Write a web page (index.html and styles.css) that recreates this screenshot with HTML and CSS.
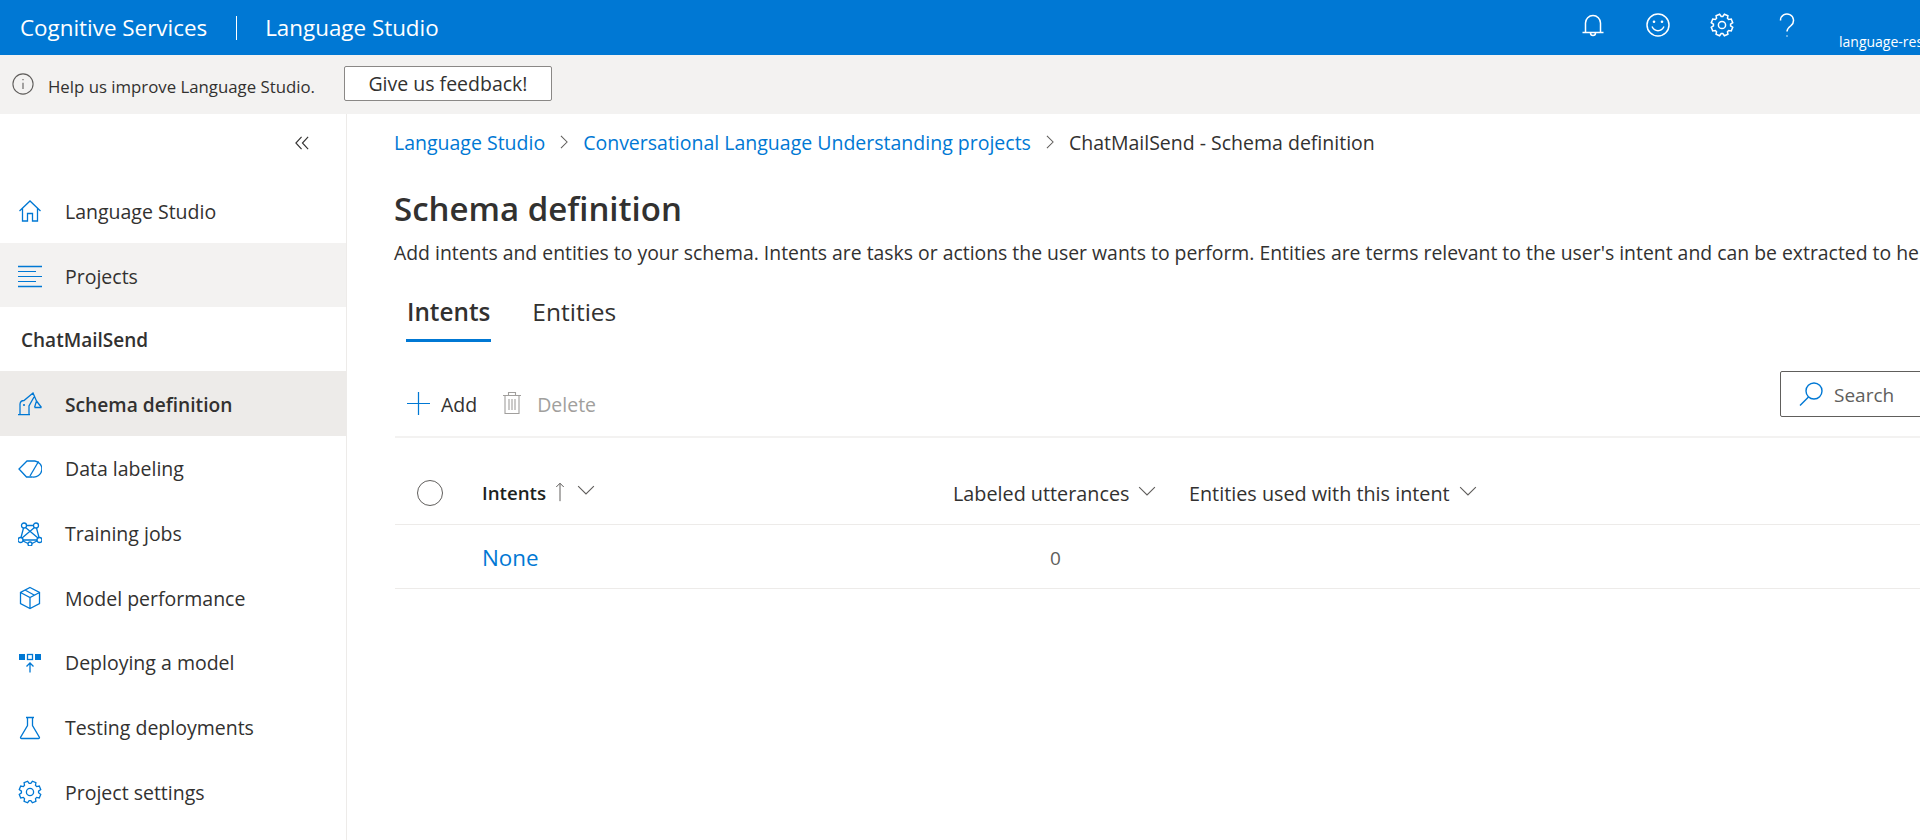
FILE: index.html
```html
<!DOCTYPE html>
<html lang="en">
<head>
<meta charset="utf-8">
<title>Language Studio</title>
<link rel="stylesheet" href="styles.css">
</head>
<body>
<svg class="defs" width="0" height="0" aria-hidden="true">
  <symbol id="gear" viewBox="0 0 24 24">
    <polygon points="20.56,12.82 22.74,14.38 21.28,17.91 18.64,17.47 17.47,18.64 17.91,21.28 14.38,22.74 12.82,20.56 11.18,20.56 9.62,22.74 6.09,21.28 6.53,18.64 5.36,17.47 2.72,17.91 1.26,14.38 3.44,12.82 3.44,11.18 1.26,9.62 2.72,6.09 5.36,6.53 6.53,5.36 6.09,2.72 9.62,1.26 11.18,3.44 12.82,3.44 14.38,1.26 17.91,2.72 17.47,5.36 18.64,6.53 21.28,6.09 22.74,9.62 20.56,11.18"/>
    <circle cx="12" cy="12" r="3.6"/>
  </symbol>
  <symbol id="chev" viewBox="0 0 16 16"><path d="M1 4.5l7 7 7-7"/></symbol>
  <symbol id="crumb" viewBox="0 0 16 16"><path d="M4.5 1l7 7-7 7"/></symbol>
</svg>

<header class="topbar">
  <div class="brand"><span>Cognitive Services</span><i class="brand-sep"></i><span>Language Studio</span></div>
  <div class="top-actions">
    <svg class="top-icon" viewBox="0 0 24 24"><path d="M4.5 19V10a7.5 7.5 0 0 1 15 0v9M1.5 19.5h21M9.5 20a2.5 2.5 0 0 0 5 0"/></svg>
    <svg class="top-icon" viewBox="0 0 24 24"><circle cx="12" cy="12" r="11"/><path d="M6 13.5c1.5 3 3.6 4.2 6 4.2s4.500-1.200 6-4.200"/><circle class="dot" cx="8" cy="8.800" r="1.300"/><circle class="dot" cx="16" cy="8.800" r="1.300"/></svg>
    <svg class="top-icon"><use href="#gear"/></svg>
    <svg class="top-icon" viewBox="0 0 24 24"><path d="M5.500 7.500a6.500 6.500 0 1 1 10.500 5.100c-2.600 2-4 3-4 6M12 22.500v1"/></svg>
    <span class="account">language-res</span>
  </div>
</header>

<div class="notice">
  <svg class="info" viewBox="0 0 24 24"><circle cx="12" cy="12" r="11"/><path d="M12 10.500v7M12 6.500v1.500"/></svg>
  <span class="notice-text">Help us improve Language Studio.</span>
  <button class="feedback">Give us feedback!</button>
</div>

<div class="shell">
  <nav class="sidebar">
    <div class="collapse">
      <svg class="collapse-icon" viewBox="0 0 16 16"><path d="M7.500 1L1 8l6.500 7M15 1L8.500 8l6.500 7"/></svg>
    </div>
    <a class="nav-item">
      <svg class="nav-icon" viewBox="0 0 24 24"><path d="M1.500 12L12 2l10.500 10M4.500 9.500V22h5v-7.500h5V22h5V9.500"/></svg>
      <span>Language Studio</span>
    </a>
    <a class="nav-item nav-hover">
      <svg class="nav-icon" viewBox="0 0 24 24"><path class="thin" d="M0 7.500h18M0 12.500h24M0 17.500h18"/><path d="M0 2.500h24M0 22.500h24"/></svg>
      <span>Projects</span>
    </a>
    <div class="nav-project">ChatMailSend</div>
    <a class="nav-item nav-active">
      <svg class="nav-icon" viewBox="0 0 24 24"><path d="M0 22.700h12M2 22.500V12a4 4 0 0 1 4-3.500L15 1l3.500 8M11 22.500V14L16 5M18.500 9l-2 6.500M18.500 9l5 6.500M16.500 15.500h7"/><circle class="dot" cx="6" cy="13" r="1.100"/></svg>
      <span>Schema definition</span>
    </a>
    <a class="nav-item">
      <svg class="nav-icon" viewBox="0 0 24 24"><path d="M17 4H9L1 12l7.500 8h6"/><path d="M14.500 20a8 8 0 1 0 2.500-16"/><path d="M20.500 4.500L12 19"/></svg>
      <span>Data labeling</span>
    </a>
    <a class="nav-item">
      <svg class="nav-icon" viewBox="0 0 24 24"><circle cx="6" cy="3.500" r="2.500"/><circle cx="18" cy="3.500" r="2.500"/><circle cx="2.500" cy="18" r="2.500"/><circle cx="21.500" cy="18" r="2.500"/><circle cx="12" cy="22" r="2"/><path d="M8.500 3.500h7M5.500 6L3 15.500M18.500 6L21 15.500M5 19l5 2.500M19 19l-5 2.500M7.500 5.500L20 16M16.500 5.500L4 16M5 18h14"/></svg>
      <span>Training jobs</span>
    </a>
    <a class="nav-item">
      <svg class="nav-icon" viewBox="0 0 24 24"><path d="M12 1.500l9.500 5v11l-9.500 5-9.500-5v-11zM2.500 6.500l9.500 5 9.500-5M12 11.500v11M7 4l9.500 5.200"/></svg>
      <span>Model performance</span>
    </a>
    <a class="nav-item">
      <svg class="nav-icon" viewBox="0 0 24 24"><rect class="fill" x="1" y="3" width="6" height="6"/><rect x="9.500" y="3.500" width="5" height="5"/><rect class="fill" x="17" y="3" width="6" height="6"/><path d="M12 21.500V12M8.500 15.500L12 12l3.500 3.500"/></svg>
      <span>Deploying a model</span>
    </a>
    <a class="nav-item">
      <svg class="nav-icon" viewBox="0 0 24 24"><path d="M8 1.500h8M9.500 1.500v8L2.500 21.500a1 1 0 0 0 1 1h17a1 1 0 0 0 1-1L14.500 9.500v-8"/></svg>
      <span>Testing deployments</span>
    </a>
    <a class="nav-item">
      <svg class="nav-icon"><use href="#gear"/></svg>
      <span>Project settings</span>
    </a>
  </nav>

  <main class="main">
    <div class="breadcrumb">
      <a class="link">Language Studio</a>
      <svg class="crumb-sep"><use href="#crumb"/></svg>
      <a class="link">Conversational Language Understanding projects</a>
      <svg class="crumb-sep"><use href="#crumb"/></svg>
      <span>ChatMailSend - Schema definition</span>
    </div>
    <h1 class="title">Schema definition</h1>
    <p class="desc">Add intents and entities to your schema. Intents are tasks or actions the user wants to perform. Entities are terms relevant to the user's intent and can be extracted to help</p>
    <div class="tabs">
      <div class="tab tab-on">Intents</div>
      <div class="tab">Entities</div>
    </div>
    <div class="toolbar">
      <div class="tool">
        <svg class="tool-plus" viewBox="0 0 24 24"><path d="M12 0v24M0 12h24"/></svg>
        <span>Add</span>
      </div>
      <div class="tool tool-off">
        <svg class="tool-trash" viewBox="0 0 20 24"><path d="M1 4.500h18M6.500 4.500V1.500h7v3M3 4.500V22.500h14V4.500M7 8v11M10 8v11M13 8v11"/></svg>
        <span>Delete</span>
      </div>
      <div class="search">
        <svg class="search-icon" viewBox="0 0 24 24"><circle cx="15" cy="9" r="8"/><path d="M9.500 15L1 23.500"/></svg>
        <span>Search</span>
      </div>
    </div>
    <div class="grid grid-head">
      <div class="cell-check"><i class="radio"></i></div>
      <div class="hcell hcell-first"><span>Intents</span><svg class="sort" viewBox="0 0 12 24"><path d="M6 23V1.500M1.500 6L6 1.500 10.500 6"/></svg><svg class="chev chev-a"><use href="#chev"/></svg></div>
      <div class="hcell hcell-light"><span>Labeled utterances</span><svg class="chev"><use href="#chev"/></svg></div>
      <div class="hcell hcell-light"><span>Entities used with this intent</span><svg class="chev"><use href="#chev"/></svg></div>
    </div>
    <div class="grid grid-row">
      <div></div>
      <a class="none">None</a>
      <div class="count">0</div>
      <div></div>
    </div>
  </main>
</div>
</body>
</html>
```
FILE: styles.css
```css
* { box-sizing: border-box; }
html, body { height: 100%; }
body {
  margin: 0;
  overflow: hidden;
  display: flex;
  flex-direction: column;
  background: #fff;
  color: #323130;
  font-family: "Open Sans", "Noto Sans", "Liberation Sans", sans-serif;
  font-stretch: 92%;
}
svg { fill: none; stroke: currentColor; flex: none; display: block; }
svg .dot, svg .fill { fill: currentColor; stroke: none; }
.defs { position: absolute; }

.topbar {
  height: 55px;
  flex: none;
  background: #0078d4;
  color: #fff;
  display: flex;
  align-items: center;
  justify-content: space-between;
  padding-left: 20px;
}
.brand { display: flex; align-items: center; font-size: 22.4px; }
.brand-sep { width: 1px; height: 24px; background: #fff; margin: 0 28.500px; }
.top-actions { display: flex; align-items: center; height: 100%; width: 340px; flex: none; padding-left: 1px; overflow: hidden; }
.top-icon { width: 24px; height: 24px; stroke-width: 1.5; margin-right: 40.500px; margin-top: -5px; }
.account { font-size: 14px; white-space: nowrap; margin-top: 27px; }

.notice {
  height: 59px;
  flex: none;
  background: #f3f2f1;
  display: flex;
  align-items: center;
  padding-left: 12px;
}
.info { width: 22px; height: 22px; stroke-width: 1.2; color: #605e5c; margin-top: -2px; }
.notice-text { font-size: 16.8px; margin-left: 14px; margin-top: 4px; }
.feedback {
  width: 208px;
  height: 35px;
  margin: 0 0 3px 29px;
  background: #fff;
  border: 1px solid #8a8886;
  border-radius: 2px;
  font: inherit;
  font-size: 19.5px;
  color: #323130;
}

.shell { flex: 1; display: flex; min-height: 0; }
.sidebar { width: 347px; flex: none; border-right: 1px solid #edebe9; display: flex; flex-direction: column; }
.collapse { height: 64px; display: flex; justify-content: flex-end; padding: 22px 37px 0 0; }
.collapse-icon { width: 14px; height: 14px; stroke-width: 1.300; color: #323130; }
.nav-item { height: 64.700px; flex: none; display: flex; align-items: center; padding: 2px 0 0 18px; font-size: 19.500px; gap: 23px; }
.nav-hover { background: #f3f2f1; }
.nav-active { background: #edebe9; font-weight: 600; font-size: 19.200px; }
.nav-project { height: 63.500px; flex: none; display: flex; align-items: center; padding: 2px 0 0 21px; font-size: 19px; font-weight: 600; }
.nav-icon { width: 24px; height: 24px; color: #0078d4; stroke-width: 1.300; }
.nav-icon .thin { stroke-width: 1; }

.main { flex: 1; min-width: 0; overflow: hidden; display: flex; flex-direction: column; padding-left: 48px; }
.breadcrumb { height: 56px; flex: none; display: flex; align-items: center; font-size: 19.500px; white-space: nowrap; margin-left: -1px; }
.link { color: #0078d4; }
.crumb-sep { width: 14px; height: 14px; margin: 0 12px; stroke-width: 1.200; color: #605e5c; }
.title { margin: 15px 0 0 -1px; font-size: 33px; line-height: 48px; font-weight: 600; }
.desc { margin: 7px 0 0 -1px; font-size: 19.400px; line-height: 26px; white-space: nowrap; }
.tabs { display: flex; margin-top: 20px; height: 56px; flex: none; padding-left: 11px; gap: 40px; }
.tab { font-size: 24.500px; line-height: 52px; height: 56px; border-bottom: 3px solid transparent; padding: 0 1px; }
.tab-on { font-weight: 600; font-size: 24.300px; border-bottom-color: #0078d4; }

.toolbar { display: flex; padding-top: 29px; height: 96px; flex: none; border-bottom: 2px solid #f3f2f1; }
.tool { display: flex; align-items: center; height: 64px; font-size: 19.500px; padding-top: 2px; }
.tool-plus { width: 23px; height: 23px; stroke-width: 1.300; color: #0078d4; margin: -2px 11px 0 12px; }
.tool-trash { width: 20px; height: 24px; stroke-width: 1.100; margin: -2px 15px 0 25px; }
.tool-off { color: #a19f9d; }
.search {
  margin-left: auto;
  margin-right: -30px;
  width: 170px;
  height: 46px;
  border: 1px solid #605e5c;
  border-radius: 2px;
  display: flex;
  align-items: center;
  padding: 2px 0 0 18px;
  font-size: 19px;
  color: #605e5c;
  gap: 11px;
}
.search-icon { width: 24px; height: 24px; stroke-width: 1.400; color: #0078d4; margin-top: -2px; }

.grid { display: grid; grid-template-columns: 87px 471px 236px 1fr; align-items: center; flex: none; }
.grid-head { height: 87px; border-bottom: 1px solid #edebe9; padding-top: 24px; }
.grid-row { height: 64px; border-bottom: 1px solid #edebe9; padding-top: 2px; }
.cell-check { padding-left: 22px; }
.radio { display: block; width: 26px; height: 26px; border: 1.500px solid #605e5c; border-radius: 50%; }
.hcell { display: flex; align-items: center; font-size: 18.700px; font-weight: 600; color: #201f1e; }
.hcell-first { margin-top: -2px; }
.hcell-light { color: #323130; font-weight: 500; font-size: 19.800px; }
.sort { width: 12px; height: 20px; margin-left: 8px; stroke-width: 1.200; color: #605e5c; }
.chev { width: 18px; height: 18px; margin-left: 9px; stroke-width: 1; color: #605e5c; margin-top: -4px; }
.chev-a { margin-left: 11px; }
.none { font-size: 22.400px; color: #0078d4; }
.count { font-size: 19px; color: #605e5c; padding-left: 97px; }
```
